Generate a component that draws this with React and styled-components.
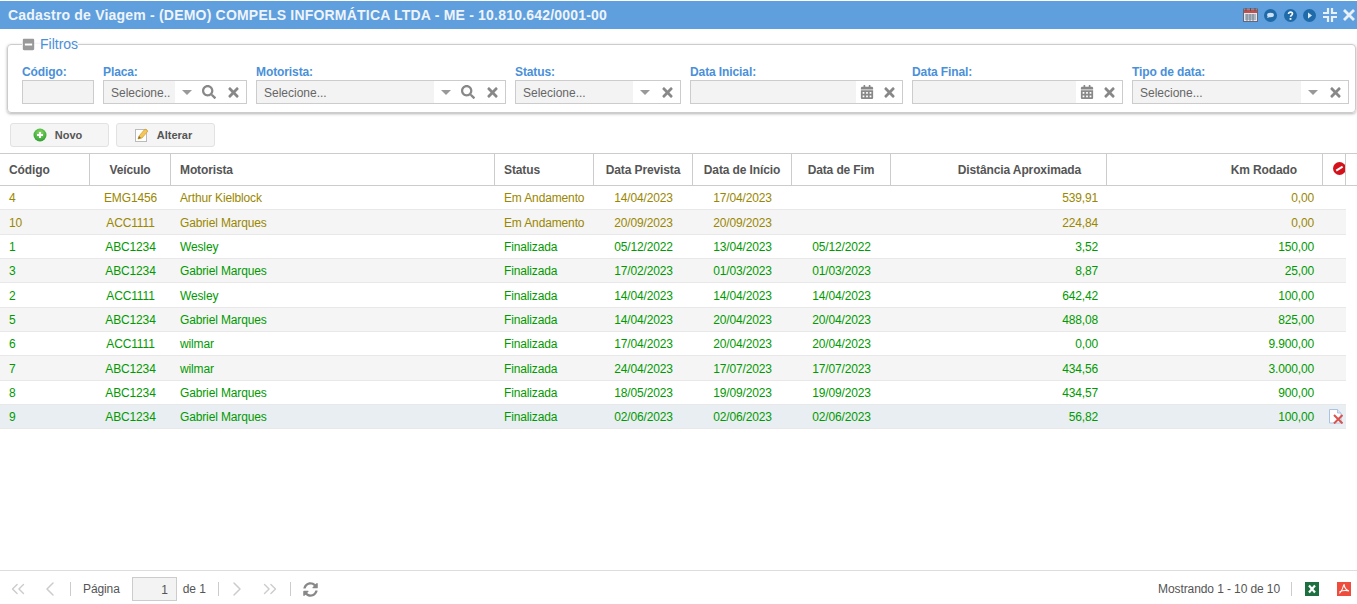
import styled, { createGlobalStyle } from "styled-components";
import { FaSearch, FaTimes, FaCalendarAlt, FaMinusSquare, FaSyncAlt } from "react-icons/fa";
import { ChevronsLeft, ChevronLeft, ChevronRight, ChevronsRight } from "lucide-react";

const GlobalStyle = createGlobalStyle`
  html, body {
    margin: 0;
    padding: 0;
    background: #fff;
    font-family: "Liberation Sans", Arial, sans-serif;
    font-size: 12px;
    color: #555;
  }
`;

const Page = styled.div`
  display: flex;
  flex-direction: column;
  height: 604px;
  overflow: hidden;
`;

const TitleBar = styled.div`
  display: flex;
  align-items: center;
  justify-content: space-between;
  height: 28px;
  margin-top: 1px;
  padding: 0 2px 0 8px;
  background: #5f9fdd;
`;

const Title = styled.div`
  color: #eef4fb;
  font-size: 14px;
  font-weight: bold;
  letter-spacing: 0.2px;
`;

const WindowIcons = styled.div`
  display: flex;
  align-items: center;
  gap: 6.5px;
`;

const FilterBox = styled.fieldset`
  margin: 8px 2px 0 7px;
  padding: 13px 6px 8px 14px;
  border: 1px solid #ccc;
  border-radius: 4px;
  box-shadow: 0 1px 3px rgba(0, 0, 0, 0.3);
`;

const Legend = styled.legend`
  display: flex;
  align-items: center;
  gap: 5px;
  padding: 0;
  color: #4a90d9;
  font-size: 14px;
  line-height: 15px;
  svg {
    color: #999;
    font-size: 13px;
  }
`;

const FilterRow = styled.div`
  display: flex;
  gap: 9px;
`;

const Field = styled.div`
  display: flex;
  flex-direction: column;
  width: ${(p) => p.$w}px;
`;

const Label = styled.label`
  height: 15px;
  line-height: 14px;
  color: #4a90d9;
  font-size: 12px;
  font-weight: bold;
  letter-spacing: -0.1px;
`;

const InputBox = styled.div`
  display: flex;
  height: 24px;
  box-sizing: border-box;
  border: 1px solid #ccc;
  background: #fff;
`;

const InputText = styled.div`
  flex: 1;
  min-width: 0;
  padding-left: 7px;
  background: #f3f3f3;
  color: #666;
  line-height: 24px;
  white-space: nowrap;
  overflow: hidden;
`;

const Triggers = styled.div`
  display: flex;
  align-items: center;
  justify-content: space-between;
  width: ${(p) => p.$w}px;
  padding: 0 5px 0 ${(p) => p.$left || 6}px;
  box-sizing: border-box;
  color: #888;
`;

const Caret = styled.span`
  width: 0;
  height: 0;
  border-left: 5px solid transparent;
  border-right: 5px solid transparent;
  border-top: 5px solid #999;
`;

const Toolbar = styled.div`
  display: flex;
  gap: 7px;
  padding: 10px 0 6px 10px;
`;

const Button = styled.button`
  display: flex;
  align-items: center;
  justify-content: center;
  gap: 8px;
  width: 99px;
  height: 24px;
  padding: 0 4px 0 0;
  background: #f5f5f5;
  border: 1px solid #e2e2e2;
  border-radius: 3px;
  color: #555;
  font-family: inherit;
  font-size: 11px;
  font-weight: bold;
`;

const GridArea = styled.div`
  flex: 1;
`;

const Table = styled.table`
  width: 1346px;
  table-layout: fixed;
  border-collapse: separate;
  border-spacing: 0;
`;

const HeadWrap = styled.div`
  border-top: 1px solid #ccc;
  border-bottom: 1px solid #ccc;
`;

const Th = styled.th`
  height: 31px;
  padding: 0 ${(p) => p.$right || 9}px 0 9px;
  box-sizing: border-box;
  border-right: 1px solid #ccc;
  color: #555;
  font-size: 12px;
  font-weight: bold;
  letter-spacing: -0.12px;
  text-align: ${(p) => p.$align || "left"};
  overflow: hidden;
`;

const Tr = styled.tr`
  background: ${(p) => (p.$selected ? "#e9eef2" : p.$odd ? "#f5f5f5" : "#fff")};
  color: ${(p) => (p.$status === "Finalizada" ? "#009a00" : "#9a8700")};
`;

const Td = styled.td`
  height: 24.35px;
  padding: 1px 9px 0;
  box-sizing: border-box;
  border-bottom: 1px solid #e8e8e8;
  font-size: 12px;
  letter-spacing: -0.14px;
  text-align: ${(p) => p.$align || "left"};
  white-space: nowrap;
  overflow: hidden;
`;

const IconCell = styled(Td)`
  padding: 0 0 0 6px;
  svg {
    display: block;
  }
`;

const Footer = styled.div`
  display: flex;
  align-items: center;
  justify-content: space-between;
  height: 34px;
  box-sizing: border-box;
  padding: 3px 6px 0 7px;
  border-top: 1px solid #ddd;
  letter-spacing: -0.1px;
`;

const Pager = styled.div`
  display: flex;
  align-items: center;
`;

const PagerButton = styled.span`
  display: flex;
  width: ${(p) => p.$w}px;
  color: #ccc;
`;

const Divider = styled.span`
  width: 1px;
  height: 14px;
  margin: 0 ${(p) => p.$after}px 0 ${(p) => p.$before}px;
  background: #ccc;
`;

const PageInput = styled.div`
  width: 45px;
  height: 24px;
  margin: 0 6px 0 12px;
  padding-right: 8px;
  box-sizing: border-box;
  background: #f3f3f3;
  border: 1px solid #ccc;
  line-height: 24px;
  text-align: right;
  color: #555;
`;

const Refresh = styled(FaSyncAlt)`
  color: #888;
`;

const Info = styled.div`
  display: flex;
  align-items: center;
`;

const ExportGap = styled.span`
  width: 18px;
`;

const NoEntryWrap = styled.span`
  display: block;
  margin-left: 1px;
`;

const columns = [
  { label: "Código", w: 90, key: "id" },
  { label: "Veículo", w: 81, key: "car", align: "center" },
  { label: "Motorista", w: 324, key: "driver" },
  { label: "Status", w: 99, key: "status" },
  { label: "Data Prevista", w: 99, key: "planned", align: "center" },
  { label: "Data de Início", w: 99, key: "start", align: "center" },
  { label: "Data de Fim", w: 99, key: "end", align: "center" },
  { label: "Distância Aproximada", w: 216, key: "dist", align: "right", headRight: 25 },
  { label: "Km Rodado", w: 216, key: "km", align: "right", headRight: 25 },
];

const rows = [
  ["4", "EMG1456", "Arthur Kielblock", "Em Andamento", "14/04/2023", "17/04/2023", "", "539,91", "0,00"],
  ["10", "ACC1111", "Gabriel Marques", "Em Andamento", "20/09/2023", "20/09/2023", "", "224,84", "0,00"],
  ["1", "ABC1234", "Wesley", "Finalizada", "05/12/2022", "13/04/2023", "05/12/2022", "3,52", "150,00"],
  ["3", "ABC1234", "Gabriel Marques", "Finalizada", "17/02/2023", "01/03/2023", "01/03/2023", "8,87", "25,00"],
  ["2", "ACC1111", "Wesley", "Finalizada", "14/04/2023", "14/04/2023", "14/04/2023", "642,42", "100,00"],
  ["5", "ABC1234", "Gabriel Marques", "Finalizada", "14/04/2023", "20/04/2023", "20/04/2023", "488,08", "825,00"],
  ["6", "ACC1111", "wilmar", "Finalizada", "17/04/2023", "20/04/2023", "20/04/2023", "0,00", "9.900,00"],
  ["7", "ABC1234", "wilmar", "Finalizada", "24/04/2023", "17/07/2023", "17/07/2023", "434,56", "3.000,00"],
  ["8", "ABC1234", "Gabriel Marques", "Finalizada", "18/05/2023", "19/09/2023", "19/09/2023", "434,57", "900,00"],
  ["9", "ABC1234", "Gabriel Marques", "Finalizada", "02/06/2023", "02/06/2023", "02/06/2023", "56,82", "100,00"],
];

const CalendarIcon = () => (
  <svg width="15" height="14" viewBox="0 0 15 14">
    <rect x="0.5" y="1" width="14" height="12.5" fill="#e4e8ee" stroke="#667" />
    <rect x="1" y="1.5" width="13" height="3.5" fill="#c0504d" />
    <path d="M3 0v3M7.5 0v3M12 0v3" stroke="#555" />
    <path d="M2 7h11M2 9h11M2 11h11M4 6v7M7 6v7M10 6v7" stroke="#6d7a8a" strokeWidth="0.9" />
  </svg>
);

const ChatIcon = () => (
  <svg width="13" height="13" viewBox="0 0 13 13">
    <circle cx="6.5" cy="6.5" r="6.5" fill="#1f6aa8" />
    <ellipse cx="6.5" cy="6" rx="3.4" ry="2.2" fill="#cfe2f3" />
    <path d="M4 7l-1 2 3-1z" fill="#cfe2f3" />
  </svg>
);

const HelpIcon = () => (
  <svg width="13" height="13" viewBox="0 0 13 13">
    <circle cx="6.5" cy="6.5" r="6.5" fill="#1f6aa8" />
    <path d="M4.5 5c0-1.3 1-1.9 2-1.9s2 .7 2 1.7c0 1.5-2 1.5-2 3" fill="none" stroke="#fff" strokeWidth="1.6" />
    <rect x="5.6" y="9" width="1.8" height="1.8" fill="#fff" />
  </svg>
);

const PlayIcon = () => (
  <svg width="13" height="13" viewBox="0 0 13 13">
    <circle cx="6.5" cy="6.5" r="6.5" fill="#1f6aa8" />
    <path d="M5 3.5l4 3-4 3z" fill="#dcebf8" />
  </svg>
);

const CompressIcon = () => (
  <svg width="14" height="14" viewBox="0 0 14 14" fill="none" stroke="#e8f1fa" strokeWidth="2.2">
    <path d="M5 0v5H0M9 0v5h5M5 14V9H0M9 14V9h5" />
  </svg>
);

const CloseIcon = () => (
  <svg width="12" height="12" viewBox="0 0 12 12" stroke="#e8f1fa" strokeWidth="2.8">
    <path d="M1 1l10 10M11 1L1 11" />
  </svg>
);

const NewIcon = () => (
  <svg width="14" height="14" viewBox="0 0 14 14">
    <defs>
      <radialGradient id="greenBall" cx="50%" cy="35%" r="70%">
        <stop offset="0" stopColor="#8fdc6a" />
        <stop offset="1" stopColor="#249a2b" />
      </radialGradient>
    </defs>
    <circle cx="7" cy="7" r="6.5" fill="url(#greenBall)" />
    <path d="M7 4v6M4 7h6" stroke="#fff" strokeWidth="2" />
  </svg>
);

const EditIcon = () => (
  <svg width="14" height="14" viewBox="0 0 14 14">
    <rect x="0.5" y="1.5" width="11" height="12" fill="#fff" stroke="#bbb" />
    <path d="M3 11l1-3 6-7 3 2-6 7z" fill="#f3c65a" stroke="#d49b2a" strokeWidth="0.7" />
    <path d="M3 11l1-3 2 2z" fill="#8a6a2a" />
  </svg>
);

const NoEntryIcon = () => (
  <svg width="13" height="13" viewBox="0 0 13 13">
    <circle cx="6.5" cy="6.5" r="6.5" fill="#d4111a" />
    <path d="M3.2 8.6l6.4-4" stroke="#fff" strokeWidth="2" />
  </svg>
);

const DeleteDocIcon = () => (
  <svg width="14" height="15" viewBox="0 0 14 15">
    <path d="M0.5 0.5h8l3.5 3.5v10h-11.500z" fill="#fff" stroke="#a9c3e0" />
    <path d="M8.500 0.500v3.500h3.500" fill="#dce8f5" stroke="#a9c3e0" />
    <path d="M5 6l8.500 8.500M13.500 6L5 14.500" stroke="#d9534f" strokeWidth="2" />
  </svg>
);

const ExcelIcon = () => (
  <svg width="14" height="14" viewBox="0 0 14 14">
    <rect width="14" height="14" fill="#1d6f42" />
    <path d="M4 3.500l6 7M10 3.500l-6 7" stroke="#fff" strokeWidth="2.200" />
  </svg>
);

const PdfIcon = () => (
  <svg width="14" height="14" viewBox="0 0 14 14">
    <rect width="14" height="14" fill="#ee4c3c" />
    <path d="M7 2c-.6 3-2 6.500-4.500 9.500M7 2c.3 3.500 2 6 5 7M2.500 9.800c3-1.300 6-1.700 9.500-.8" fill="none" stroke="#fff" strokeWidth="1.100" />
  </svg>
);

const SelectField = ({ label, w, trigger, search, text = "Selecione..." }) => (
  <Field $w={w}>
    <Label>{label}</Label>
    <InputBox>
      <InputText>{text}</InputText>
      <Triggers $w={trigger} $left={7}>
        <Caret />
        {search && <FaSearch size={14} />}
        <FaTimes size={15} />
      </Triggers>
    </InputBox>
  </Field>
);

const DateField = ({ label, w }) => (
  <Field $w={w}>
    <Label>{label}</Label>
    <InputBox>
      <InputText />
      <Triggers $w={46} $left={4}>
        <FaCalendarAlt size={14} />
        <FaTimes size={15} />
      </Triggers>
    </InputBox>
  </Field>
);

const App = () => (
  <Page>
    <GlobalStyle />
    <TitleBar>
      <Title>Cadastro de Viagem - (DEMO) COMPELS INFORMÁTICA LTDA - ME - 10.810.642/0001-00</Title>
      <WindowIcons>
        <CalendarIcon />
        <ChatIcon />
        <HelpIcon />
        <PlayIcon />
        <CompressIcon />
        <CloseIcon />
      </WindowIcons>
    </TitleBar>

    <FilterBox>
      <Legend>
        <FaMinusSquare />
        Filtros
      </Legend>
      <FilterRow>
        <Field $w={72}>
          <Label>Código:</Label>
          <InputBox>
            <InputText />
          </InputBox>
        </Field>
        <SelectField label="Placa:" w={144} trigger={71} search text="Selecione.." />
        <SelectField label="Motorista:" w={250} trigger={71} search />
        <SelectField label="Status:" w={166} trigger={47} />
        <DateField label="Data Inicial:" w={213} />
        <DateField label="Data Final:" w={211} />
        <SelectField label="Tipo de data:" w={217} trigger={47} />
      </FilterRow>
    </FilterBox>

    <Toolbar>
      <Button>
        <NewIcon />
        Novo
      </Button>
      <Button>
        <EditIcon />
        Alterar
      </Button>
    </Toolbar>

    <GridArea>
      <HeadWrap>
        <Table>
          <colgroup>
            {columns.map((c) => (
              <col key={c.key} style={{ width: c.w }} />
            ))}
            <col style={{ width: 23 }} />
          </colgroup>
          <thead>
            <tr>
              {columns.map((c) => (
                <Th key={c.key} $align={c.align} $right={c.headRight}>
                  {c.label}
                </Th>
              ))}
              <Th>
                <NoEntryWrap>
                  <NoEntryIcon />
                </NoEntryWrap>
              </Th>
            </tr>
          </thead>
        </Table>
      </HeadWrap>
      <Table>
        <colgroup>
          {columns.map((c) => (
            <col key={c.key} style={{ width: c.w }} />
          ))}
          <col style={{ width: 23 }} />
        </colgroup>
        <tbody>
          {rows.map((row, i) => (
            <Tr key={row[0]} $odd={i % 2 === 1} $selected={i === 9} $status={row[3]}>
              {row.map((value, j) => (
                <Td key={j} $align={columns[j].align}>
                  {value}
                </Td>
              ))}
              <IconCell>{i === 9 && <DeleteDocIcon />}</IconCell>
            </Tr>
          ))}
        </tbody>
      </Table>
    </GridArea>

    <Footer>
      <Pager>
        <PagerButton $w={31}><ChevronsLeft size={22} strokeWidth={1.5} /></PagerButton>
        <PagerButton $w={32}><ChevronLeft size={24} strokeWidth={1.5} /></PagerButton>
        <Divider $before={0} $after={12} />
        <span>Página</span>
        <PageInput>1</PageInput>
        <span>de 1</span>
        <Divider $before={12} $after={6} />
        <PagerButton $w={34}><ChevronRight size={24} strokeWidth={1.5} /></PagerButton>
        <PagerButton $w={31}><ChevronsRight size={22} strokeWidth={1.5} /></PagerButton>
        <Divider $before={0} $after={12} />
        <Refresh size={15} />
      </Pager>
      <Info>
        <span>Mostrando 1 - 10 de 10</span>
        <Divider $before={11} $after={13} />
        <ExcelIcon />
        <ExportGap />
        <PdfIcon />
      </Info>
    </Footer>
  </Page>
);

export default App;
